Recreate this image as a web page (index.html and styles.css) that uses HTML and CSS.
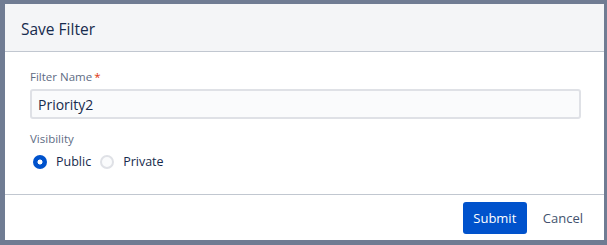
FILE: index.html
```html
<!DOCTYPE html>
<html lang="en">
<head>
    <meta charset="UTF-8">
    <title>Save Filter</title>
    <link rel="stylesheet" href="styles.css">
</head>
<body>
    <div class="dialog">
        <div class="dialog-header">
            <h2>Save Filter</h2>
        </div>
        <div class="dialog-body">
            <label class="field-label" for="filterName">Filter Name<span class="req">*</span></label>
            <input type="text" id="filterName" class="text-input" value="Priority2">

            <div class="field-label vis-label">Visibility</div>
            <div class="radios">
                <label class="radio"><span class="dot checked"></span>Public</label>
                <label class="radio"><span class="dot"></span>Private</label>
            </div>
        </div>
        <div class="dialog-footer">
            <button class="btn-primary">Submit</button>
            <button class="btn-link">Cancel</button>
        </div>
    </div>
</body>
</html>
```

FILE: styles.css
```css
* {
    box-sizing: border-box;
}

body {
    margin: 0;
    background: #707c93;
    font-family: 'Open Sans', 'Noto Sans', sans-serif;
    color: #172b4d;
}

.dialog {
    margin: 4px 0 0 5px;
    width: 599px;
    height: 236px;
    background: #fff;
    display: flex;
    flex-direction: column;
}

.dialog-header {
    height: 48px;
    background: #f4f5f7;
    border-bottom: 1px solid #c1c7d0;
    display: flex;
    align-items: center;
    padding-left: 16px;
}

.dialog-header h2 {
    margin: 0;
    font-size: 15.5px;
    font-weight: 400;
    padding-top: 2px;
}

.dialog-body {
    flex: 1;
    padding: 17px 24px 0 25px;
}

.field-label {
    display: block;
    font-size: 11.5px;
    color: #5e6c84;
    line-height: 16px;
    margin-bottom: 4px;
}

.req {
    color: #de350b;
    margin-left: 2px;
}

.text-input {
    display: block;
    width: 551px;
    height: 30px;
    border: 2px solid #dfe1e6;
    border-radius: 3px;
    background: #fafbfc;
    padding: 0 6px;
    font-family: inherit;
    font-size: 14px;
    color: #172b4d;
    outline: none;
}

.vis-label {
    margin-top: 12px;
}

.radios {
    display: flex;
    gap: 6px;
    margin-top: 5px;
}

.radio {
    display: flex;
    align-items: center;
    font-size: 12.5px;
    line-height: 20px;
}

.dot {
    width: 14px;
    height: 14px;
    border-radius: 50%;
    border: 2px solid #dfe1e6;
    background: #fafbfc;
    margin: 0 9px 0 3px;
}

.dot.checked {
    border: none;
    background: radial-gradient(circle, #fff 0 2.2px, #0052cc 2.8px);
}

.dialog-footer {
    height: 46px;
    border-top: 1px solid #c1c7d0;
    display: flex;
    justify-content: flex-end;
    align-items: flex-start;
    padding: 7px 12px 0 0;
    gap: 6px;
}

.btn-primary {
    height: 32px;
    width: 64px;
    border: none;
    border-radius: 3px;
    background: #0052cc;
    color: #fff;
    font-family: inherit;
    font-size: 13px;
}

.btn-link {
    height: 32px;
    padding: 0 9px 0 10px;
    border: none;
    background: none;
    color: #42526e;
    font-family: inherit;
    font-size: 13px;
}
```
